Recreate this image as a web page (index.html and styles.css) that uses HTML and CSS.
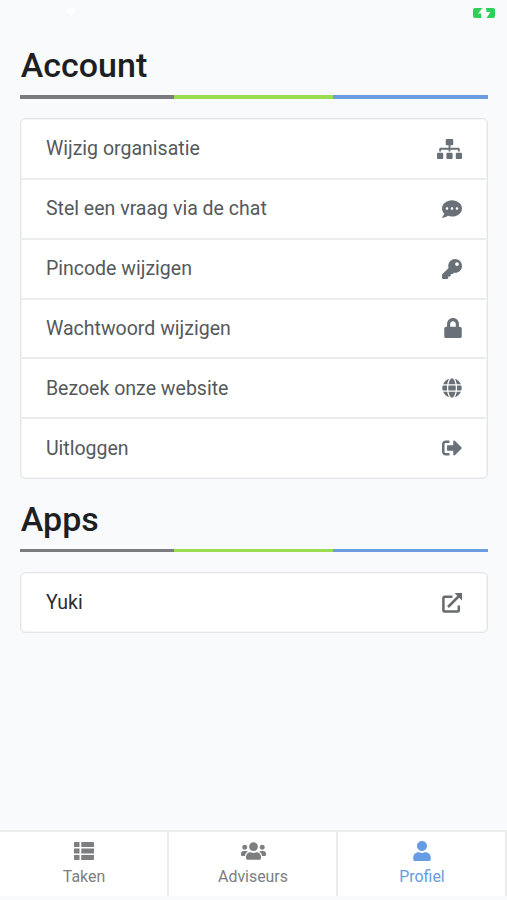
FILE: index.html
```html
<!DOCTYPE html>
<html lang="nl">
<head>
    <meta charset="UTF-8">
    <meta name="viewport" content="width=device-width, initial-scale=1.0">
    <title>Profiel</title>
    <link rel="stylesheet" href="styles.css">
</head>
<body>
    <div class="app">
        <header class="status-bar">
            <svg class="wifi" viewBox="0 0 16 12"><path d="M8 12L0 3.500Q8-3.500 16 3.500z"/></svg>
            <svg class="battery" viewBox="0 0 22 10"><path d="M2 0h7.500L5 5.500H8L8.500 10H2Q0 10 0 8V2Q0 0 2 0zM13 0h7q2 0 2 2v6q0 2-2 2h-6.500l4-6H13.500z"/></svg>
        </header>
        <main class="content">
            <h1>Account</h1>
            <div class="stripe"></div>
            <ul class="list">
                <li>
                    <span>Wijzig organisatie</span>
                    <svg class="icon icon-wide" viewBox="0 0 640 512"><path d="M128 352H32c-17.670 0-32 14.330-32 32v96c0 17.670 14.330 32 32 32h96c17.670 0 32-14.330 32-32v-96c0-17.670-14.330-32-32-32zm-24-80h192v48h48v-48h192v48h48v-57.590c0-21.170-17.230-38.410-38.410-38.410H344v-64h40c17.670 0 32-14.330 32-32V32c0-17.670-14.330-32-32-32H256c-17.670 0-32 14.330-32 32v96c0 17.670 14.330 32 32 32h40v64H94.410C73.230 224 56 241.230 56 262.410V320h48v-48zm264 80h-96c-17.670 0-32 14.330-32 32v96c0 17.670 14.330 32 32 32h96c17.670 0 32-14.330 32-32v-96c0-17.670-14.330-32-32-32zm240 0h-96c-17.670 0-32 14.330-32 32v96c0 17.670 14.330 32 32 32h96c17.670 0 32-14.330 32-32v-96c0-17.670-14.330-32-32-32z"/></svg>
                </li>
                <li>
                    <span>Stel een vraag via de chat</span>
                    <svg class="icon" viewBox="0 0 512 512"><path d="M256 32C114.600 32 0 125.100 0 240c0 49.600 21.400 95 57 130.700C44.500 421.100 2.700 466 2.200 466.500c-2.200 2.300-2.800 5.700-1.500 8.700S4.800 480 8 480c66.300 0 116-31.800 140.600-51.400 32.700 12.300 69 19.400 107.400 19.400 141.400 0 256-93.100 256-208S397.400 32 256 32zM128 272c-17.700 0-32-14.300-32-32s14.300-32 32-32 32 14.300 32 32-14.300 32-32 32zm128 0c-17.700 0-32-14.300-32-32s14.300-32 32-32 32 14.300 32 32-14.300 32-32 32zm128 0c-17.700 0-32-14.300-32-32s14.300-32 32-32 32 14.300 32 32-14.300 32-32 32z"/></svg>
                </li>
                <li>
                    <span>Pincode wijzigen</span>
                    <svg class="icon" viewBox="0 0 512 512"><path d="M512 176c0 97.200-78.800 176-176 176-11.200 0-22.200-1.100-32.800-3.100l-24 27A24 24 0 0 1 261.200 384H224v40c0 13.300-10.700 24-24 24h-40v40c0 13.300-10.700 24-24 24H24c-13.300 0-24-10.700-24-24v-78.100c0-6.400 2.500-12.500 7-17l161.800-161.800C163 213.800 160 195.300 160 176 160 78.800 238.800 0 336 0s176 78.500 176 176zM336 128a48 48 0 1 0 96 0 48 48 0 0 0-96 0z"/></svg>
                </li>
                <li>
                    <span>Wachtwoord wijzigen</span>
                    <svg class="icon icon-lock" viewBox="0 0 448 512"><path d="M400 224h-24v-72C376 68.200 307.800 0 224 0S72 68.200 72 152v72H48c-26.500 0-48 21.500-48 48v192c0 26.500 21.500 48 48 48h352c26.500 0 48-21.500 48-48V272c0-26.500-21.500-48-48-48zm-104 0H152v-72c0-39.700 32.300-72 72-72s72 32.300 72 72v72z"/></svg>
                </li>
                <li>
                    <span>Bezoek onze website</span>
                    <svg class="icon" viewBox="0 0 496 512"><path d="M336.500 160C322 70.700 287.800 8 248 8s-74 62.700-88.500 152h177zM152 256c0 22.200 1.200 43.500 3.300 64h185.300c2.100-20.500 3.300-41.800 3.300-64s-1.200-43.500-3.300-64H155.300c-2.100 20.500-3.300 41.800-3.300 64zm324.700-96c-28.600-67.900-86.500-120.400-158-141.600 24.400 33.800 41.200 84.700 50 141.600h108zM177.200 18.400C105.800 39.600 47.800 92.100 19.300 160h108c8.700-56.900 25.500-107.800 49.900-141.600zM487.400 192H372.700c2.100 21 3.300 42.500 3.300 64s-1.200 43-3.300 64h114.600c5.500-20.500 8.600-41.800 8.600-64s-3.100-43.500-8.500-64zM120 256c0-21.500 1.200-43 3.300-64H8.600C3.200 212.500 0 233.800 0 256s3.200 43.500 8.600 64h114.600c-2-21-3.200-42.500-3.200-64zm39.500 96c14.500 89.300 48.700 152 88.500 152s74-62.700 88.500-152h-177zm159.300 141.600c71.400-21.200 129.400-73.700 158-141.600h-108c-8.800 56.900-25.600 107.800-50 141.600zM19.300 352c28.600 67.900 86.500 120.400 158 141.600-24.400-33.800-41.200-84.700-50-141.600h-108z"/></svg>
                </li>
                <li>
                    <span>Uitloggen</span>
                    <svg class="icon" viewBox="0 0 512 512"><path d="M497 273L329 441c-15 15-41 4.500-41-17v-96H152c-13.300 0-24-10.700-24-24v-96c0-13.300 10.700-24 24-24h136V88c0-21.400 25.900-32 41-17l168 168c9.300 9.400 9.300 24.600 0 34zM192 436v-40c0-6.600-5.400-12-12-12H96c-17.700 0-32-14.300-32-32V160c0-17.700 14.300-32 32-32h84c6.600 0 12-5.400 12-12V76c0-6.600-5.400-12-12-12H96c-53 0-96 43-96 96v192c0 53 43 96 96 96h84c6.600 0 12-5.400 12-12z"/></svg>
                </li>
            </ul>
            <h1>Apps</h1>
            <div class="stripe"></div>
            <ul class="list list-apps">
                <li>
                    <span>Yuki</span>
                    <svg class="icon" viewBox="0 0 20 20"><path d="M10.500 3.700H2.600Q1.400 3.700 1.400 4.900v12.500q0 1.200 1.200 1.200h13q1.200 0 1.200-1.200V12.500M6 14L16.500 3.500" fill="none" stroke="#666b6f" stroke-width="2.500"/><path d="M12.500 0H20v7.500z"/></svg>
                </li>
            </ul>
        </main>
        <nav class="tabs">
            <a class="tab" href="#">
                <svg viewBox="0 0 20 18"><path d="M1 0h4.500v5H0V1Q0 0 1 0zM7.300 0H19q1 0 1 1v4H7.300zM0 6.500h5.500v5H0zM7.300 6.500H20v5H7.300zM0 13h5.500v5H1Q0 18 0 17zM7.300 13H20v4q0 1-1 1H7.300z"/></svg>
                <span>Taken</span>
            </a>
            <a class="tab" href="#">
                <svg class="tab-users" viewBox="0 0 640 512"><path d="M96 224c35.300 0 64-28.700 64-64s-28.700-64-64-64-64 28.700-64 64 28.700 64 64 64zm448 0c35.300 0 64-28.700 64-64s-28.700-64-64-64-64 28.700-64 64 28.700 64 64 64zm32 32h-64c-17.600 0-33.500 7.100-45.100 18.600 40.300 22.100 68.900 62 75.100 109.400h66c17.700 0 32-14.300 32-32v-32c0-35.300-28.700-64-64-64zm-256 0c61.900 0 112-50.100 112-112S381.900 32 320 32 208 82.100 208 144s50.100 112 112 112zm76.800 32h-8.300c-20.800 10-43.900 16-68.500 16s-47.600-6-68.500-16h-8.300C179.600 288 128 339.600 128 403.200V432c0 26.500 21.500 48 48 48h288c26.500 0 48-21.500 48-48v-28.800c0-63.600-51.600-115.200-115.200-115.200zm-223.700-13.400C161.500 263.100 145.600 256 128 256H64c-35.300 0-64 28.700-64 64v32c0 17.700 14.300 32 32 32h65.900c6.300-47.400 34.900-87.300 75.200-109.400z"/></svg>
                <span>Adviseurs</span>
            </a>
            <a class="tab active" href="#">
                <svg viewBox="0 0 448 512"><path d="M224 256c70.700 0 128-57.300 128-128S294.700 0 224 0 96 57.300 96 128s57.300 128 128 128zm89.600 32h-16.700c-22.200 10.200-46.900 16-72.900 16s-50.600-5.800-72.900-16h-16.700C60.200 288 0 348.200 0 422.400V464c0 26.500 21.500 48 48 48h352c26.500 0 48-21.500 48-48v-41.600c0-74.200-60.200-134.400-134.400-134.400z"/></svg>
                <span>Profiel</span>
            </a>
        </nav>
    </div>
</body>
</html>
```
FILE: styles.css
```css
* {
    box-sizing: border-box;
}
body {
    margin: 0;
    font-family: Roboto, "Liberation Sans", sans-serif;
    background-color: #f9fafc;
}
.app {
    display: flex;
    flex-direction: column;
    height: 900px;
    padding-bottom: 4px;
}
.status-bar {
    display: flex;
    justify-content: space-between;
    height: 26px;
    padding: 8px 12px 0 64px;
}
.wifi {
    width: 14px;
    height: 8px;
    fill: #fff;
}
.battery {
    width: 22px;
    height: 10px;
    fill: #2bd158;
}
.content {
    flex: 1;
    padding: 19px 19.500px 0 20.400px;
}
h1 {
    margin: 0;
    font-size: 34px;
    font-weight: 500;
    line-height: 40px;
    text-indent: 0.400px;
    color: #1d1f22;
}
.stripe {
    height: 3.500px;
    margin: 10px 0 19.500px;
    background: linear-gradient(to right, #7b7c80 154px, #9bdb50 154px, #9bdb50 313px, #6b9ddf 313px);
}
.list {
    margin: 0 0 20px;
    padding: 1px 1px 0;
    list-style: none;
    background-color: #fff;
    border: 1px solid #e4e6e7;
    border-radius: 5px;
    box-shadow: inset 0 0 0 1px #f4f5f5;
}
.list li {
    display: flex;
    justify-content: space-between;
    align-items: center;
    height: 59.850px;
    padding: 0 23.500px;
    font-size: 19.550px;
    color: #55595c;
    border-bottom: 2px solid #ebeded;
}
.list li:last-child {
    height: 58.500px;
    border-bottom: none;
}
.list.list-apps li {
    color: #2c2e30;
}
.icon {
    width: 20px;
    height: 20px;
    fill: #697077;
}
.icon-wide {
    width: 25px;
}
.icon-lock {
    width: 18px;
}
.list-apps .icon {
    fill: #666b6f;
}
.tabs {
    display: flex;
    height: 66px;
    background-color: #fff;
    border-top: 2px solid #ebeded;
}
.tab {
    flex: 1;
    display: flex;
    flex-direction: column;
    align-items: center;
    gap: 6px;
    padding: 9px 0 0 1px;
    font-size: 15.900px;
    line-height: 20px;
    color: #7d7e80;
    text-decoration: none;
    border-right: 2px solid #ebeded;
}
.tab svg {
    width: 20px;
    height: 20px;
    fill: currentColor;
}
.tab .tab-users {
    width: 25px;
}
.tab.active {
    color: #669ce3;
}
```
